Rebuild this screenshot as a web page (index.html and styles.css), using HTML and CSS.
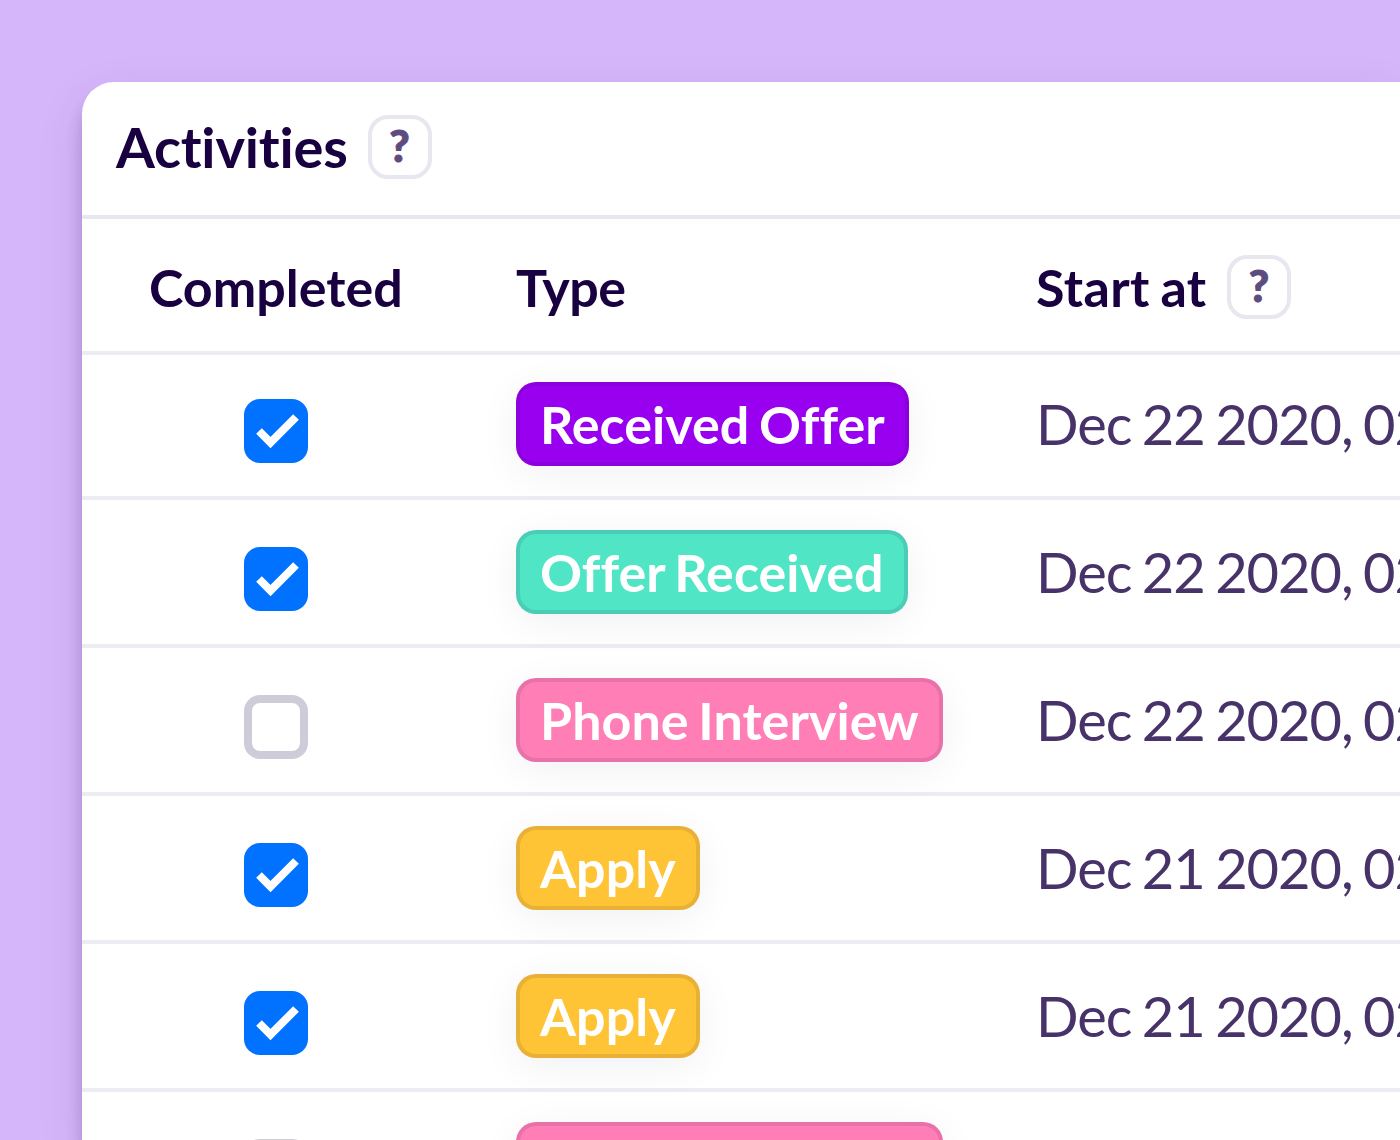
FILE: index.html
```html
<!DOCTYPE html>
<html lang="en">
<head>
  <meta charset="UTF-8" />
  <meta name="viewport" content="width=device-width, initial-scale=1.0"/>
  <title>Activities</title>
  <link rel="stylesheet" href="styles.css">
</head>
<body>

  <div class="card">
    <div class="card-header">
      <h2>Activities</h2>
      <span class="help">?</span>
    </div>

    <div class="row head">
      <div class="cell-completed">Completed</div>
      <div class="cell-type">Type</div>
      <div class="cell-start"><span class="label">Start at</span><span class="help">?</span></div>
    </div>

    <div class="row">
      <div class="cell-check"><span class="checkbox checked"><svg viewBox="0 0 64 64"><path d="M15 32L26.500 43.500L52 18"/></svg></span></div>
      <div class="cell-type"><span class="tag purple">Received Offer</span></div>
      <div class="cell-start">Dec 22 2020, 02</div>
    </div>
    <div class="row">
      <div class="cell-check"><span class="checkbox checked"><svg viewBox="0 0 64 64"><path d="M15 32L26.500 43.500L52 18"/></svg></span></div>
      <div class="cell-type"><span class="tag teal">Offer Received</span></div>
      <div class="cell-start">Dec 22 2020, 02</div>
    </div>
    <div class="row">
      <div class="cell-check"><span class="checkbox"></span></div>
      <div class="cell-type"><span class="tag pink">Phone Interview</span></div>
      <div class="cell-start">Dec 22 2020, 02</div>
    </div>
    <div class="row">
      <div class="cell-check"><span class="checkbox checked"><svg viewBox="0 0 64 64"><path d="M15 32L26.500 43.500L52 18"/></svg></span></div>
      <div class="cell-type"><span class="tag yellow">Apply</span></div>
      <div class="cell-start">Dec 21 2020, 02</div>
    </div>
    <div class="row">
      <div class="cell-check"><span class="checkbox checked"><svg viewBox="0 0 64 64"><path d="M15 32L26.500 43.500L52 18"/></svg></span></div>
      <div class="cell-type"><span class="tag yellow">Apply</span></div>
      <div class="cell-start">Dec 21 2020, 02</div>
    </div>
    <div class="row last">
      <div class="cell-check"><span class="checkbox"></span></div>
      <div class="cell-type"><span class="tag pink"></span></div>
    </div>
  </div>

</body>
</html>
```
FILE: styles.css
```css
/* Base styles */
* {
  margin: 0;
  padding: 0;
  box-sizing: border-box;
}

body {
  height: 1140px;
  padding: 82px 0 0 82px;
  overflow: hidden;
  background-color: #d6b6fa;
  font-family: Lato, sans-serif;
  color: #190041;
}

.card {
  height: 1058px;
  background-color: #ffffff;
  border-radius: 32px 0 0 0;
  box-shadow: 0 16px 16px rgba(25, 0, 65, 0.2), 0 16px 48px rgba(25, 0, 65, 0.1);
}

/* Card title */
.card-header {
  display: flex;
  align-items: flex-start;
  gap: 20px;
  height: 137px;
  padding: 33px 34px 0;
  border-bottom: 4px solid #e8e6ef;
}

.card-header h2 {
  margin-top: -2px;
  font-size: 56px;
  font-weight: 700;
  line-height: 67px;
  letter-spacing: -0.2px;
}

.help {
  display: flex;
  justify-content: center;
  flex-shrink: 0;
  width: 64px;
  height: 64px;
  border: 4px solid #e8e6ef;
  border-radius: 20px;
  color: #5e4b80;
  font-size: 44px;
  font-weight: 900;
  line-height: 52px;
  -webkit-text-stroke: 1px #5e4b80;
}

/* Table */
.row {
  display: grid;
  grid-template-columns: 434px 520px 1fr;
  height: 148px;
  border-bottom: 4px solid #edecf2;
  white-space: nowrap;
}

.row.head {
  height: 136px;
  font-size: 52px;
  font-weight: 700;
  line-height: 62px;
  padding-top: 37px;
}

.head .cell-type {
  letter-spacing: -0.5px;
}

.head .label {
  width: 170px;
  letter-spacing: 0.4px;
  word-spacing: -2.5px;
}

.row.head + .row {
  height: 145px;
}

.row.head + .row .cell-check {
  padding-top: 44px;
}

.row.head + .row .cell-type {
  padding-top: 27px;
}

.row.head + .row .cell-start {
  padding-top: 35px;
}

.row.last {
  height: 48px;
  border-bottom: none;
  overflow: hidden;
}

.cell-completed {
  padding-left: 67px;
}

.cell-check {
  padding: 47px 0 0 162px;
}

.row:not(.head) .cell-type {
  padding-top: 30px;
}

.row:not(.head) .cell-start {
  padding-top: 38px;
  overflow: hidden;
  color: #473369;
  font-size: 56px;
  line-height: 67px;
  letter-spacing: -1px;
  word-spacing: -3px;
}

.head .cell-start {
  display: flex;
  gap: 21px;
}

.head .help {
  margin-top: -1px;
}

.checkbox {
  display: block;
  width: 64px;
  height: 64px;
  border: 8px solid #cfccda;
  border-radius: 16px;
}

.checkbox.checked {
  border: none;
  background-color: #0072ff;
}

.checkbox svg {
  display: block;
  fill: none;
  stroke: #ffffff;
  stroke-width: 8;
}

.tag {
  display: inline-block;
  height: 84px;
  padding: 0 20px;
  border: 4px solid rgba(25, 0, 65, 0.1);
  border-radius: 20px;
  box-shadow: 0 8px 40px rgba(25, 0, 65, 0.06);
  color: #ffffff;
  font-size: 52px;
  font-weight: 700;
  line-height: 76px;
  letter-spacing: 0.05px;
  word-spacing: -3px;
  font-variant-ligatures: none;
}

.purple {
  background-color: #9900f0;
}

.teal {
  background-color: #50e5c4;
}

.pink {
  background-color: #ff7eb6;
}

.yellow {
  background-color: #ffc436;
}

.last .tag {
  width: 427px;
}
```
